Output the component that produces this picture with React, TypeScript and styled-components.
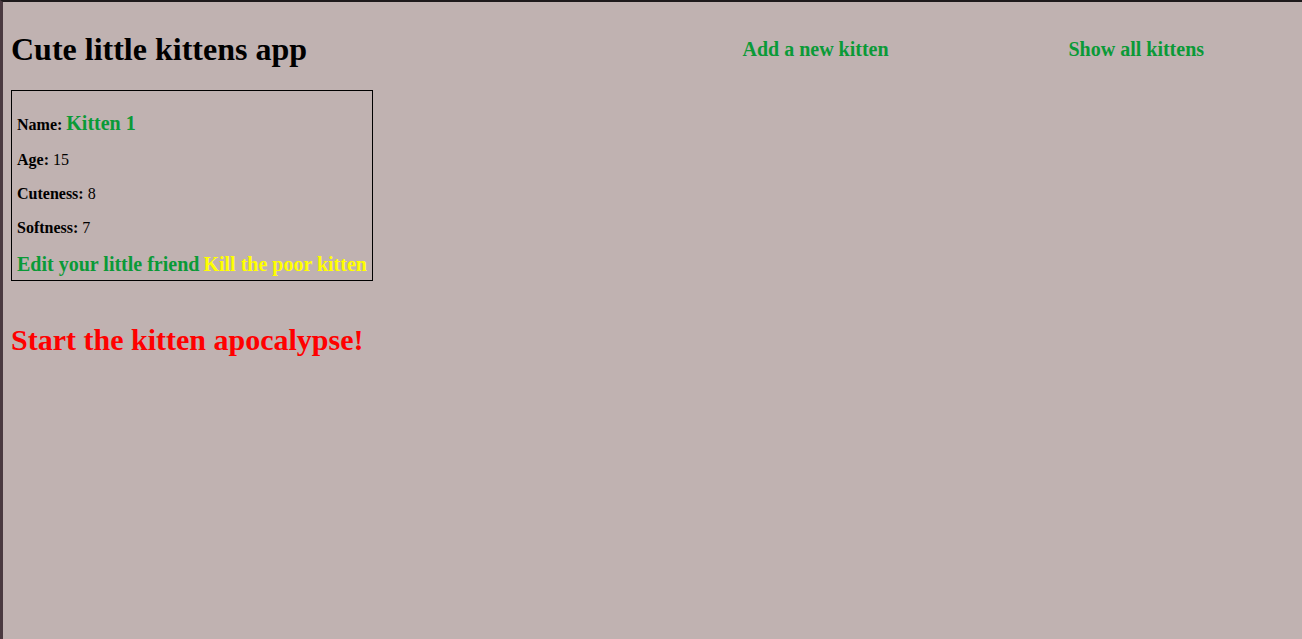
import React from "react";
import styled, { createGlobalStyle } from "styled-components";

const Global = createGlobalStyle`
  html, body { margin: 0; padding: 0; background: #c0b2b1; }
  body { font-family: "Liberation Serif", "Times New Roman", serif; color: #000; }
`;

const Page = styled.div`
  min-height: 100vh;
  box-sizing: border-box;
  border-left: 3px solid #4a3940;
  border-top: 2px solid #1e1a1c;
  padding: 8px;
  background: #c0b2b1;
`;

const Header = styled.header`
  display: flex;
  align-items: center;
`;

const Title = styled.h1`
  flex: 1;
  font-size: 32px;
  margin: 21.44px 0;
`;

const Nav = styled.nav`
  flex: 1;
  display: flex;
  justify-content: space-around;
  align-items: center;
`;

const NavLink = styled.a`
  color: #0a9a37;
  font-weight: bold;
  font-size: 20px;
  text-decoration: none;
`;

const Card = styled.div`
  display: inline-block;
  border: 1px solid #000;
  padding: 5px;
`;

const Row = styled.p`
  margin: 16px 0;
  font-size: 16px;
`;

const Label = styled.b``;

const KittenName = styled.span`
  color: #0a9a37;
  font-weight: bold;
  font-size: 20px;
`;

const Actions = styled.div`
  display: flex;
  gap: 4px;
  line-height: 22px;
`;

const Action = styled.a<{ $tone: string }>`
  color: ${(p) => p.$tone};
  font-weight: bold;
  font-size: 20px;
  text-decoration: none;
`;

const Apocalypse = styled.h2`
  color: #ff0000;
  font-size: 30px;
  margin: 42px 0 0;
`;

export default function App() {
  return (
    <>
      <Global />
      <Page>
        <Header>
          <Title>Cute little kittens app</Title>
          <Nav>
            <NavLink href="#">Add a new kitten</NavLink>
            <NavLink href="#">Show all kittens</NavLink>
          </Nav>
        </Header>
        <Card>
          <Row>
            <Label>Name:</Label> <KittenName>Kitten 1</KittenName>
          </Row>
          <Row>
            <Label>Age:</Label> 15
          </Row>
          <Row>
            <Label>Cuteness:</Label> 8
          </Row>
          <Row>
            <Label>Softness:</Label> 7
          </Row>
          <Actions>
            <Action href="#" $tone="#0a9a37">Edit your little friend</Action>
            <Action href="#" $tone="#ffff00">Kill the poor kitten</Action>
          </Actions>
        </Card>
        <Apocalypse>Start the kitten apocalypse!</Apocalypse>
      </Page>
    </>
  );
}
